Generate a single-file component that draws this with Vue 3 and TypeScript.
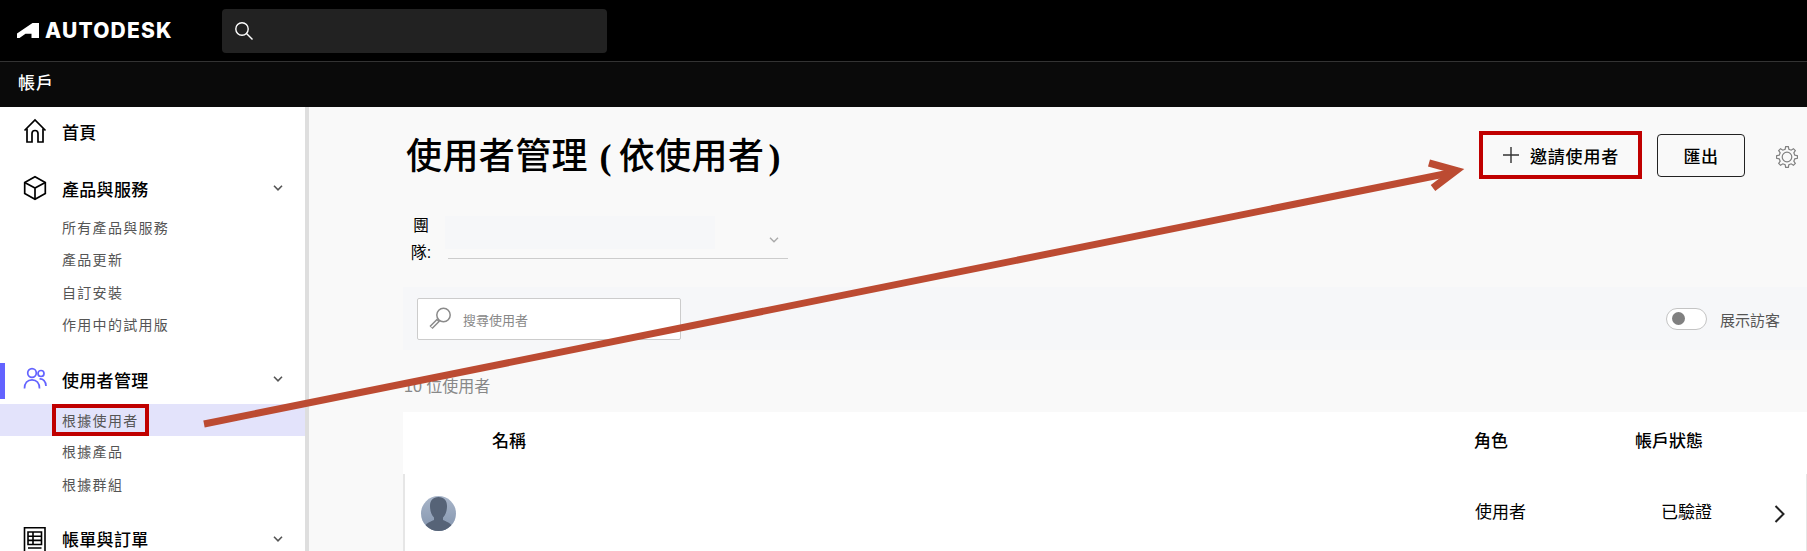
<script setup lang="ts">
interface NavGroup {
  label: string;
  icon: 'home' | 'box' | 'users' | 'ledger';
  active?: boolean;
  chevron: boolean;
  subs: { label: string; selected?: boolean }[];
}

const groups: NavGroup[] = [
  { label: '首頁', icon: 'home', chevron: false, subs: [] },
  {
    label: '產品與服務',
    icon: 'box',
    chevron: true,
    subs: [{ label: '所有產品與服務' }, { label: '產品更新' }, { label: '自訂安裝' }, { label: '作用中的試用版' }],
  },
  {
    label: '使用者管理',
    icon: 'users',
    active: true,
    chevron: true,
    subs: [{ label: '根據使用者', selected: true }, { label: '根據產品' }, { label: '根據群組' }],
  },
  { label: '帳單與訂單', icon: 'ledger', chevron: true, subs: [] },
];

// gear outline: 8 teeth around a 22px box
function gearPath(): string {
  const pts: string[] = [];
  const teeth = 8;
  for (let i = 0; i < teeth; i++) {
    const a = (i / teeth) * Math.PI * 2;
    const step = (Math.PI * 2) / teeth;
    const corners: [number, number][] = [
      [8, -0.3],
      [10.5, -0.16],
      [10.5, 0.16],
      [8, 0.3],
    ];
    for (const [r, f] of corners) {
      const t = a + f * step;
      pts.push(`${(11 + r * Math.cos(t)).toFixed(2)} ${(11 + r * Math.sin(t)).toFixed(2)}`);
    }
  }
  return 'M' + pts.join('L') + 'Z';
}
const gear = gearPath();
</script>

<template>
  <div class="page">
    <header class="topbar">
      <div class="brand">
        <svg class="brand__mark" width="22" height="15" viewBox="0 0 22 15">
          <path d="M0 15 V10.500 L15.500 0 H22 V15 H14.500 V10.800 H8.500 L2.500 15Z" fill="#fff" />
        </svg>
        <span class="brand__name">AUTODESK</span>
      </div>
      <div class="topsearch">
        <svg width="18" height="18" viewBox="0 0 18 18" fill="none" stroke="#fff" stroke-width="1.4">
          <circle cx="7" cy="7" r="6.2" />
          <path d="M11.5 11.5 L17.5 17.5" />
        </svg>
      </div>
    </header>
    <div class="subbar">帳戶</div>

    <div class="body">
      <aside class="sidebar">
        <section v-for="g in groups" :key="g.label" class="group">
          <div class="nav-head" :class="{ 'is-active': g.active }">
            <svg class="nav-icon" width="24" height="24" viewBox="0 0 24 24" fill="none" stroke="currentColor" stroke-width="1.7">
              <template v-if="g.icon === 'home'">
                <path d="M1.5 11.5 L12 1 L22.500 11.500" />
                <path d="M4 9.500 V23 H9 V14.500 A3 3 0 0 1 15 14.500 V23 H20 V9.500" />
              </template>
              <template v-else-if="g.icon === 'box'">
                <path d="M12 .8 L22.300 6.500 V17.500 L12 23.200 L1.700 17.500 V6.500Z" />
                <path d="M1.700 6.500 L12 12 L22.300 6.500 M12 12 V23.200" />
              </template>
              <template v-else-if="g.icon === 'users'">
                <circle cx="9" cy="6" r="4.300" />
                <path d="M1.500 21.500 C1.500 16 4.500 12.800 9 12.800 C13.500 12.800 16.500 16 16.500 21.500" />
                <circle cx="18" cy="6.500" r="3" />
                <path d="M16.500 12 C20 11.500 23 14.500 23 19" />
              </template>
              <template v-else>
                <path d="M1.500 .8 H22 V25 H1.500Z" stroke-width="1.600" />
                <path d="M5 5 H18.500 V17.500 H5Z M5 9.200 H18.500 M5 13.400 H18.500 M10 5 V17.500 M5 21 H18.500" stroke-width="1.600" />
              </template>
            </svg>
            <span class="nav-label">{{ g.label }}</span>
            <svg v-if="g.chevron" class="nav-chevron" width="10" height="6" viewBox="0 0 10 6" fill="none" stroke="#555" stroke-width="1.600">
              <path d="M1 .8 L5 4.800 L9 .8" />
            </svg>
          </div>
          <ul v-if="g.subs.length" class="subs">
            <li v-for="s in g.subs" :key="s.label" class="sub" :class="{ 'is-selected': s.selected }">
              <span :class="{ callout: s.selected }">{{ s.label }}</span>
            </li>
          </ul>
        </section>
      </aside>

      <main class="main">
        <div class="titlerow">
          <h1 class="title">使用者管理 <span class="paren paren--open">(</span>依使用者<span class="paren paren--close">)</span></h1>
          <div class="actions">
            <button class="btn-invite">
              <svg width="16" height="16" viewBox="0 0 16 16" stroke="#333" stroke-width="1.400"><path d="M8 0 V16 M0 8 H16" /></svg>
              邀請使用者
            </button>
            <button class="btn-export">匯出</button>
            <svg class="gear" width="22" height="22" viewBox="0 0 22 22" fill="none" stroke="#808080" stroke-width="1.200">
              <path :d="gear" />
              <circle cx="11" cy="11" r="4.800" />
            </svg>
          </div>
        </div>

        <div class="team">
          <label class="team__label">團隊:</label>
          <div class="team__select">
            <span class="team__value"></span>
            <svg width="10" height="6" viewBox="0 0 10 6" fill="none" stroke="#aaa" stroke-width="1.400"><path d="M1 .8 L5 4.800 L9 .8" /></svg>
          </div>
        </div>

        <div class="toolbar">
          <div class="usersearch">
            <svg width="24" height="24" viewBox="0 0 24 24" fill="none" stroke="#8a8a8a">
              <circle cx="15.500" cy="8" r="6.700" stroke-width="1.500" />
              <path d="M10.500 13 L3 20.500" stroke-width="4.500" />
              <path d="M9.500 14 L3.500 20" stroke="#fff" stroke-width="1.500" />
            </svg>
            <span class="usersearch__hint">搜尋使用者</span>
          </div>
          <div class="guests">
            <span class="toggle"><span class="toggle__knob"></span></span>
            <span class="guests__label">展示訪客</span>
          </div>
        </div>

        <div class="count">10 位使用者</div>

        <div class="table">
          <div class="table__head">
            <span class="col-name">名稱</span>
            <span class="col-role">角色</span>
            <span class="col-status">帳戶狀態</span>
          </div>
          <div class="table__row">
            <svg class="avatar" width="35" height="35" viewBox="0 0 35 35">
              <defs>
                <linearGradient id="avatar-bg" x1="0" y1="0" x2="0" y2="1">
                  <stop offset="0" stop-color="#a8b5c9" />
                  <stop offset="1" stop-color="#8495ae" />
                </linearGradient>
                <clipPath id="avatar-clip"><circle cx="17.500" cy="17.500" r="17.500" /></clipPath>
              </defs>
              <g clip-path="url(#avatar-clip)">
                <rect width="35" height="35" fill="url(#avatar-bg)" />
                <path d="M17.500 1 C12 1 9 4.500 9 10 C9 15 10.500 19 13 21.500 L13 24 C10 25.500 6 26.500 4 30 L4 35 H31 V30 C29 26.500 25 25.500 22 24 L22 21.500 C24.500 19 26 15 26 10 C26 4.500 23 1 17.500 1Z" fill="#566377" />
              </g>
            </svg>
            <span class="col-role cell">使用者</span>
            <span class="col-verified cell">已驗證</span>
            <svg class="row-arrow" width="11" height="18" viewBox="0 0 11 18" fill="none" stroke="#222" stroke-width="2"><path d="M1.500 1 L9.500 9 L1.500 17" /></svg>
          </div>
        </div>
      </main>
    </div>

    <!-- annotation drawn over the screenshot -->
    <svg class="annotation" width="1807" height="551" viewBox="0 0 1807 551" fill="none" stroke="#bc4b32" stroke-width="7">
      <path d="M204 424 L1452 172.500" />
      <path d="M1429 163 L1456 170.500 L1433 188" stroke-width="7.500" />
    </svg>
  </div>
</template>

<style scoped>
.page {
  position: relative;
  width: 1807px;
  height: 551px;
  overflow: hidden;
  display: flex;
  flex-direction: column;
  font-family: "Liberation Sans", "Noto Sans CJK TC", sans-serif;
  color: #000;
  background: #f9f9f9;
}
.topbar {
  height: 61px;
  flex: 0 0 auto;
  display: flex;
  align-items: center;
  padding: 0 0 0 17px;
  background: #000;
  border-bottom: 1px solid #333;
}
.brand {
  width: 205px;
  display: flex;
  align-items: center;
  gap: 6px;
  margin-top: -1px;
}
.brand__name {
  font-family: Inter, "Liberation Sans", sans-serif;
  font-size: 21px;
  font-weight: 800;
  letter-spacing: 1.200px;
  line-height: 15px;
  color: #fff;
}
.topsearch {
  width: 385px;
  height: 44px;
  margin-top: 1px;
  display: flex;
  align-items: center;
  padding-left: 13px;
  box-sizing: border-box;
  background: #222;
  border-radius: 4px;
}
.subbar {
  height: 45px;
  flex: 0 0 auto;
  box-sizing: border-box;
  padding: 10px 0 0 18px;
  line-height: 24px;
  font-size: 17px;
  font-weight: 500;
  letter-spacing: 1px;
  color: #fff;
  background: #0a0a0a;
}
.body {
  flex: 1 1 auto;
  min-height: 0;
  display: flex;
}
.sidebar {
  width: 305px;
  flex: 0 0 auto;
  box-sizing: border-box;
  padding-top: 6px;
  background: #fff;
  box-shadow: 4px 0 0 #dedede;
  display: flex;
  flex-direction: column;
  gap: 21px;
}
.group:nth-child(4) {
  margin-top: -1px;
}
.nav-head {
  position: relative;
  height: 36px;
  display: flex;
  align-items: center;
  padding-left: 23px;
  color: #000;
}
.nav-head.is-active::before {
  content: "";
  position: absolute;
  left: 0;
  top: 2px;
  width: 5px;
  height: 36px;
  background: #6363ff;
}
.nav-icon {
  flex: 0 0 auto;
  overflow: visible;
}
.nav-head.is-active .nav-icon {
  color: #6363ff;
}
.nav-label {
  margin-left: 15px;
  font-size: 17px;
  font-weight: 500;
  letter-spacing: 0.3px;
}
.nav-chevron {
  position: absolute;
  left: 273px;
  top: 15px;
}
.subs {
  list-style: none;
  margin: 5px 0 0;
  padding: 0;
}
.group:nth-child(3) .subs {
  margin-top: 7px;
}
.sub {
  height: 32.300px;
  box-sizing: border-box;
  display: flex;
  align-items: center;
  padding-left: 62px;
  font-size: 14px;
  letter-spacing: 1.300px;
  color: #555;
}
.group:nth-child(3) .sub:not(.is-selected) {
  padding-bottom: 2px;
}
.sub.is-selected {
  height: 32px;
  background: #e3e3fb;
}
.callout {
  align-self: stretch;
  display: flex;
  align-items: center;
  margin-left: -10px;
  padding: 0 6px 1px;
  border: 4px solid #c00000;
  box-sizing: border-box;
}
.main {
  flex: 1 1 auto;
  min-width: 0;
  margin-left: 4px;
  padding: 24px 0 0 94px;
  display: flex;
  flex-direction: column;
}
.titlerow {
  height: 48px;
  display: flex;
  align-items: center;
  justify-content: space-between;
  padding: 0 9px 0 3px;
}
.title {
  margin: 3px 0 0;
  font-size: 36px;
  line-height: 44px;
  font-weight: 500;
  letter-spacing: 0.4px;
  word-spacing: 1px;
  white-space: nowrap;
}
.paren {
  font-family: "Liberation Serif", serif;
  font-weight: 700;
}
.paren--open {
  margin-right: 7px;
}
.paren--close {
  margin-left: 4px;
}
.actions {
  display: flex;
  align-items: center;
}
.btn-invite {
  width: 163px;
  height: 48px;
  display: flex;
  align-items: center;
  gap: 11px;
  padding: 0 0 0 20px;
  box-sizing: border-box;
  border: 4px solid #c00000;
  background: transparent;
  font: inherit;
  font-size: 17px;
  font-weight: 500;
  letter-spacing: 0.8px;
  color: #000;
}
.btn-export {
  width: 88px;
  height: 43px;
  margin-left: 15px;
  box-sizing: border-box;
  border: 1px solid #222;
  border-radius: 4px;
  background: transparent;
  font: inherit;
  font-size: 17px;
  font-weight: 500;
  letter-spacing: 0.5px;
  color: #000;
}
.gear {
  margin-left: 31px;
  margin-top: 3px;
}
.team {
  margin: 33px 0 0 5px;
  display: flex;
  align-items: flex-start;
}
.team__label {
  width: 26px;
  font-size: 16px;
  line-height: 27px;
  text-align: center;
}
.team__select {
  width: 340px;
  height: 43px;
  margin: 4px 0 0 14px;
  box-sizing: border-box;
  border-bottom: 1px solid #ccc;
  display: flex;
  justify-content: space-between;
  align-items: flex-start;
}
.team__value {
  width: 270px;
  height: 33px;
  margin-left: -3px;
  background: #f6f7f9;
}
.team__select svg {
  margin: 21px 9px 0 0;
}
.toolbar {
  height: 63px;
  margin-top: 21px;
  flex: 0 0 auto;
  box-sizing: border-box;
  padding: 1px 27px 0 14px;
  display: flex;
  align-items: center;
  justify-content: space-between;
  background: #f6f7f9;
}
.usersearch {
  width: 264px;
  height: 42px;
  box-sizing: border-box;
  padding-left: 10px;
  display: flex;
  align-items: center;
  gap: 11px;
  background: #fff;
  border: 1px solid #ccc;
  border-radius: 2px;
}
.usersearch__hint {
  font-size: 13px;
  color: #888;
}
.guests {
  display: flex;
  align-items: center;
  gap: 13px;
}
.toggle {
  width: 41px;
  height: 22px;
  box-sizing: border-box;
  padding: 3px 0 0 5px;
  background: #fff;
  border: 1px solid #c4c4c4;
  border-radius: 11px;
}
.toggle__knob {
  display: block;
  width: 13px;
  height: 13px;
  border-radius: 50%;
  background: #808080;
}
.guests__label {
  font-size: 15px;
  color: #555;
}
.count {
  margin: 27px 0 0 1px;
  font-size: 16px;
  line-height: 20px;
  color: #888;
}
.table {
  margin-top: 15px;
  flex: 1 1 auto;
  background: #fff;
}
.table__head {
  position: relative;
  height: 62px;
  font-size: 17px;
  font-weight: 500;
  line-height: 60px;
}
.table__row {
  position: relative;
  height: 78px;
  border-left: 2px solid #e6e6e6;
  border-right: 1px solid #e6e6e6;
  font-size: 17px;
}
.col-name,
.col-role,
.col-status,
.col-verified {
  position: absolute;
}
.col-name {
  left: 89px;
}
.col-role {
  left: 1071px;
}
.col-status {
  left: 1232px;
}
.cell {
  top: 27px;
  line-height: 24px;
}
.table__row .col-role {
  left: 1070px;
}
.col-verified {
  left: 1256px;
}
.avatar {
  position: absolute;
  left: 16px;
  top: 22px;
}
.row-arrow {
  position: absolute;
  left: 1369px;
  top: 31px;
}
.annotation {
  position: absolute;
  left: 0;
  top: 0;
  pointer-events: none;
}
</style>
